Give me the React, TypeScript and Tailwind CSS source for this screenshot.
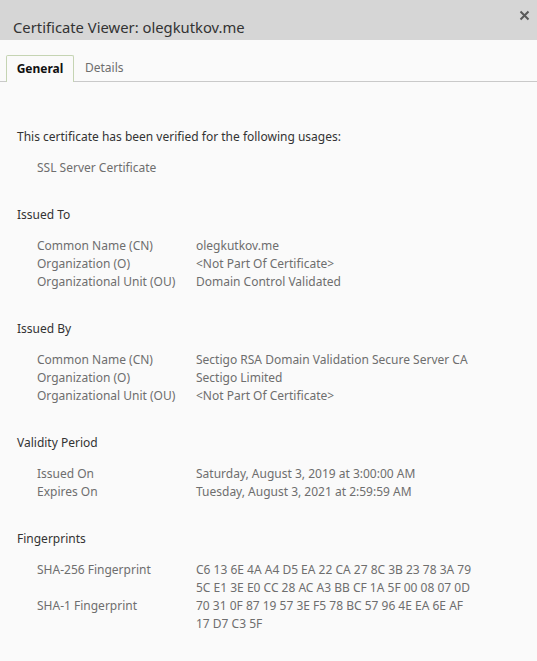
import React from "react";

type Row = { label: string; value: string[] };

const sections: { title: string; rows: Row[] }[] = [
  {
    title: "Issued To",
    rows: [
      { label: "Common Name (CN)", value: ["olegkutkov.me"] },
      { label: "Organization (O)", value: ["<Not Part Of Certificate>"] },
      { label: "Organizational Unit (OU)", value: ["Domain Control Validated"] },
    ],
  },
  {
    title: "Issued By",
    rows: [
      { label: "Common Name (CN)", value: ["Sectigo RSA Domain Validation Secure Server CA"] },
      { label: "Organization (O)", value: ["Sectigo Limited"] },
      { label: "Organizational Unit (OU)", value: ["<Not Part Of Certificate>"] },
    ],
  },
  {
    title: "Validity Period",
    rows: [
      { label: "Issued On", value: ["Saturday, August 3, 2019 at 3:00:00 AM"] },
      { label: "Expires On", value: ["Tuesday, August 3, 2021 at 2:59:59 AM"] },
    ],
  },
  {
    title: "Fingerprints",
    rows: [
      {
        label: "SHA-256 Fingerprint",
        value: [
          "C6 13 6E 4A A4 D5 EA 22 CA 27 8C 3B 23 78 3A 79",
          "5C E1 3E E0 CC 28 AC A3 BB CF 1A 5F 00 08 07 0D",
        ],
      },
      {
        label: "SHA-1 Fingerprint",
        value: ["70 31 0F 87 19 57 3E F5 78 BC 57 96 4E EA 6E AF", "17 D7 C3 5F"],
      },
    ],
  },
];

export default function App() {
  return (
    <div className="w-[537px] h-[661px] bg-[#fafafa] font-['Noto_Sans',sans-serif] text-[12px] leading-[18px] text-[#333] overflow-hidden">
      {/* title bar */}
      <div className="h-[40px] bg-[#d6d6d6] flex items-start justify-between">
        <div className="pl-[13px] pt-[17px] text-[14.8px] leading-[20px] text-[#333]">
          Certificate Viewer: olegkutkov.me
        </div>
        <button className="mr-[6px] mt-[9px] w-[13px] h-[13px] flex items-center justify-center">
          <svg width="11" height="11" viewBox="0 0 11 11">
            <path d="M1.5 1.5 L9.5 9.5 M9.5 1.5 L1.5 9.5" stroke="#5a5a5a" strokeWidth="2" />
          </svg>
        </button>
      </div>

      {/* tabs */}
      <div className="mt-[15px] flex items-end border-b border-[#c9c9c9] pl-[6px] h-[27px]">
        <div className="h-[27px] w-[68px] border border-b-0 border-[#c5d4b3] rounded-t-[2px] bg-[#fafafa] flex items-center justify-center font-bold text-[#111] -mb-px">
          General
        </div>
        <div className="h-[26px] px-[11px] flex items-center text-[#6e6e6e]">Details</div>
      </div>

      {/* content */}
      <div className="pl-[17px] pt-[46px]">
        <div>This certificate has been verified for the following usages:</div>
        <div className="mt-[13px] pl-[20px] text-[#6e6e6e]">SSL Server Certificate</div>

        {sections.map((s) => (
          <div key={s.title} className="mt-[29px]">
            <div>{s.title}</div>
            <div className="mt-[13px] pl-[20px] text-[#6e6e6e]">
              {s.rows.map((r) => (
                <div key={r.label} className="flex">
                  <div className="w-[159px] shrink-0">{r.label}</div>
                  <div>
                    {r.value.map((v) => (
                      <div key={v}>{v}</div>
                    ))}
                  </div>
                </div>
              ))}
            </div>
          </div>
        ))}
      </div>
    </div>
  );
}
